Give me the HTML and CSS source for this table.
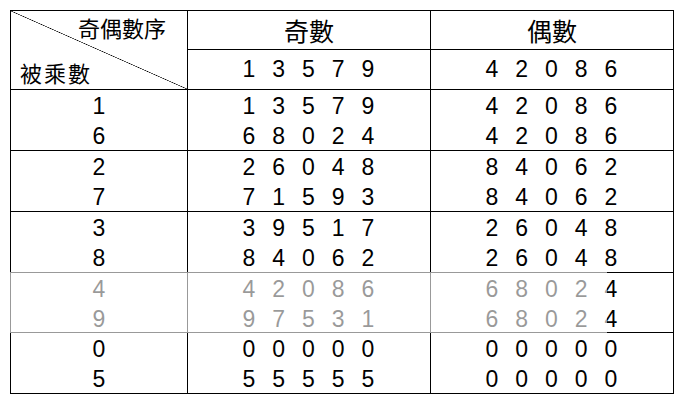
FILE: index.html
```html
<!DOCTYPE html>
<html lang="zh-Hant">
<head>
<meta charset="utf-8">
<title>奇偶數序</title>
<link rel="stylesheet" href="styles.css">
</head>
<body>
<div class="table">
  <div class="cell corner">
    <span class="corner-top">奇偶數序</span>
    <span class="corner-bottom">被乘數</span>
  </div>
  <div class="cell head">奇數</div>
  <div class="cell head">偶數</div>
  <div class="cell num single">1 3 5 7 9</div>
  <div class="cell num single">4 2 0 8 6</div>

  <div class="cell num"><div>1</div><div>6</div></div>
  <div class="cell num digits"><div>1 3 5 7 9</div><div>6 8 0 2 4</div></div>
  <div class="cell num digits"><div>4 2 0 8 6</div><div>4 2 0 8 6</div></div>

  <div class="cell num"><div>2</div><div>7</div></div>
  <div class="cell num digits"><div>2 6 0 4 8</div><div>7 1 5 9 3</div></div>
  <div class="cell num digits"><div>8 4 0 6 2</div><div>8 4 0 6 2</div></div>

  <div class="cell num"><div>3</div><div>8</div></div>
  <div class="cell num digits"><div>3 9 5 1 7</div><div>8 4 0 6 2</div></div>
  <div class="cell num digits"><div>2 6 0 4 8</div><div>2 6 0 4 8</div></div>

  <div class="cell num"><div>4</div><div>9</div></div>
  <div class="cell num digits"><div>4 2 0 8 6</div><div>9 7 5 3 1</div></div>
  <div class="cell num digits"><div>6 8 0 2 4</div><div>6 8 0 2 4</div></div>

  <div class="cell num"><div>0</div><div>5</div></div>
  <div class="cell num digits"><div>0 0 0 0 0</div><div>5 5 5 5 5</div></div>
  <div class="cell num digits"><div>0 0 0 0 0</div><div>0 0 0 0 0</div></div>

  <div class="fade"></div>
</div>
</body>
</html>
```

FILE: styles.css
```css
html, body {
  margin: 0;
  background: #fff;
}

body {
  padding: 10px;
  color: #000;
  font-family: "Liberation Sans", Arial, sans-serif;
}

.table {
  position: relative;
  display: grid;
  grid-template-columns: 177px 243px 243px;
  grid-template-rows: 39px 40px 61px 61px 61px 60px 61px;
  width: max-content;
  border-top: 1px solid #000;
  border-left: 1px solid #000;
}

.cell {
  box-sizing: border-box;
  border-right: 1px solid #000;
  border-bottom: 1px solid #000;
}

.corner {
  grid-row: span 2;
  display: flex;
  flex-direction: column;
  justify-content: space-between;
  padding: 5px 21px 6px 9px;
  font-family: "Noto Sans CJK TC", "Noto Sans CJK SC", sans-serif;
  font-size: 22px;
  line-height: 22px;
  background: linear-gradient(to top right, transparent calc(50% - 0.6px), #000 50%, transparent calc(50% + 0.6px));
}

.corner-top {
  align-self: flex-end;
  letter-spacing: 0;
}

.corner-bottom {
  align-self: flex-start;
  letter-spacing: 2px;
}

.head {
  text-align: center;
  font-family: "Noto Sans CJK TC", "Noto Sans CJK SC", sans-serif;
  font-size: 25px;
  line-height: 38px;
}

.num {
  text-align: center;
  font-size: 23px;
  line-height: 30px;
  padding-top: 1px;
}

.num.single {
  line-height: 39px;
  padding-top: 0;
}

.single,
.digits {
  letter-spacing: 5.3px;
  padding-left: 4px;
}

.fade {
  position: absolute;
  left: -1px;
  top: 261px;
  width: 597px;
  height: 61px;
  background: rgba(255, 255, 255, 0.6);
}
```
